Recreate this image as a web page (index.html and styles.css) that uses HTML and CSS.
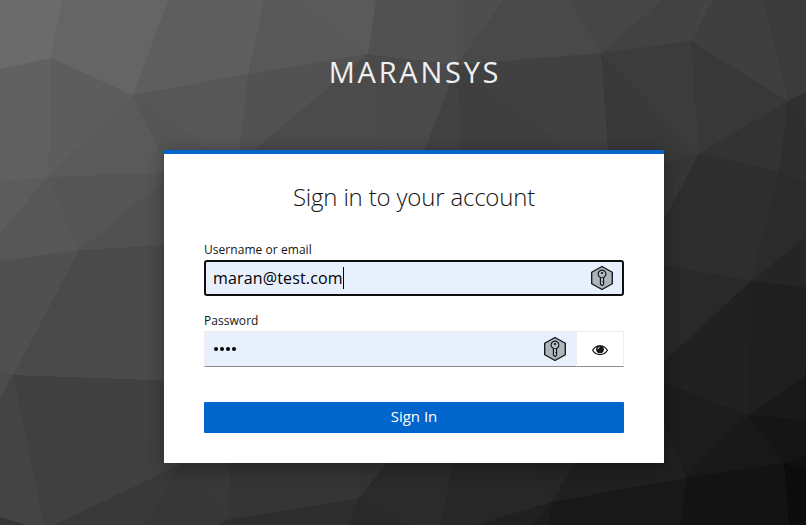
FILE: index.html
```html
<!DOCTYPE html>
<html lang="en">
<head>
<meta charset="utf-8">
<title>Sign in to Maransys</title>
<link rel="stylesheet" href="styles.css">
</head>
<body>
<svg class="backdrop" viewBox="0 0 806 525" shape-rendering="crispEdges" aria-hidden="true">
<rect width="806" height="525" fill="#444"/>
<path fill="#6b6b6b" d="M0 0H62L51 58 0 69z"/>
<path fill="#656565" d="M62 0H168L133 95 51 58z"/>
<path fill="#616161" d="M0 69 51 58 48 177 0 181z"/>
<path fill="#5d5d5d" d="M51 58 133 95 48 177z"/>
<path fill="#5e5e5e" d="M168 0H213L248 74 133 95z"/>
<path fill="#5f5f5f" d="M213 0H264L248 74z"/>
<path fill="#575757" d="M133 95 248 74 242 160H225z"/>
<path fill="#5a5a5a" d="M133 95 48 177 170 173z"/>
<path fill="#555" d="M133 95 225 160 170 173z"/>
<path fill="#585858" d="M264 0H296L368 54 248 74z"/>
<path fill="#5a5a5a" d="M296 0H376L368 54z"/>
<path fill="#525252" d="M248 74 368 54 238 165z"/>
<path fill="#4b4b4b" d="M368 54 242 160H386z"/>
<path fill="#515151" d="M376 0H457V65L368 54z"/>
<path fill="#4a4a4a" d="M368 54 457 65 421 160H386z"/>
<path fill="#4e4e4e" d="M457 0H503L457 65z"/>
<path fill="#494949" d="M503 0H569L601 53 457 65z"/>
<path fill="#424242" d="M457 65 421 160H461z"/>
<path fill="#3f3f3f" d="M457 65 461 160H585z"/>
<path fill="#414141" d="M457 65 601 53 608 160H585z"/>
<path fill="#464646" d="M569 0H662L601 53z"/>
<path fill="#424242" d="M662 0H703L691 41 601 53z"/>
<path fill="#444" d="M703 0H713L691 41z"/>
<path fill="#3c3c3c" d="M601 53 691 41 699 153z"/>
<path fill="#393939" d="M601 53 699 153 664 165 608 155z"/>
<path fill="#3f3f3f" d="M713 0H763L788 101 691 41z"/>
<path fill="#3b3b3b" d="M763 0H806V92L788 101z"/>
<path fill="#383838" d="M691 41 788 101 699 153z"/>
<path fill="#303030" d="M788 101 806 92V125z"/>
<path fill="#2e2e2e" d="M788 101 806 125V182L779 172z"/>
<path fill="#333" d="M788 101 779 172 699 153z"/>
<path fill="#363636" d="M699 153 660 163V228z"/>
<path fill="#2e2e2e" d="M699 153 779 172 751 281 660 264V228z"/>
<path fill="#2b2b2b" d="M779 172 806 182V237L751 281z"/>
<path fill="#252525" d="M751 281 806 237V287z"/>
<path fill="#292929" d="M751 281 660 264V365z"/>
<path fill="#212121" d="M751 281 748 415 660 381V365z"/>
<path fill="#1f1f1f" d="M751 281 806 287V375L748 415z"/>
<path fill="#191919" d="M748 415 806 375V420z"/>
<path fill="#1c1c1c" d="M748 415 686 478 660 411V381z"/>
<path fill="#181818" d="M748 415 784 463 686 478z"/>
<path fill="#151515" d="M748 415 806 420V456L784 463z"/>
<path fill="#101010" d="M784 463 806 456V469z"/>
<path fill="#0c0c0c" d="M784 463 806 469V525H789z"/>
<path fill="#131313" d="M784 463 789 525H681L686 478z"/>
<path fill="#5c5c5c" d="M48 177 0 181V233z"/>
<path fill="#575757" d="M48 177 0 233V261L79 250z"/>
<path fill="#555" d="M48 177 170 173V176L79 250z"/>
<path fill="#515151" d="M79 250 170 176V245z"/>
<path fill="#505050" d="M79 250 0 261V372L13 375z"/>
<path fill="#4a4a4a" d="M79 250 170 245V381L13 375z"/>
<path fill="#4b4b4b" d="M13 375 0 372V398z"/>
<path fill="#444" d="M13 375 0 398V517L28 525H44z"/>
<path fill="#404040" d="M13 375 181 459V464L54 525H44z"/>
<path fill="#414141" d="M13 375 181 381V459z"/>
<path fill="#363636" d="M0 517V525H28z"/>
<path fill="#393939" d="M181 464 54 525H145z"/>
<path fill="#373737" d="M181 464 145 525H218L229 519z"/>
<path fill="#383838" d="M181 460V464L229 519 230 460z"/>
<path fill="#353535" d="M230 460H361L358 499 229 519z"/>
<path fill="#2d2d2d" d="M229 519 358 499 349 525H218z"/>
<path fill="#333" d="M361 460H389L358 499z"/>
<path fill="#2b2b2b" d="M389 460H453L441 525H411L358 499z"/>
<path fill="#292929" d="M358 499 411 525H349z"/>
<path fill="#272727" d="M453 460H530L551 502 476 525H441z"/>
<path fill="#262626" d="M530 460H578L551 502z"/>
<path fill="#202020" d="M551 502 476 525H532z"/>
<path fill="#1c1c1c" d="M551 502 532 525H550z"/>
<path fill="#202020" d="M578 460 660 411 686 478 551 502z"/>
<path fill="#181818" d="M551 502 686 478 681 525H550z"/>
</svg>
<svg class="defs" aria-hidden="true">
<symbol id="key" viewBox="0 0 24 26">
<path d="M12 1.5 22.3 7.2V18.8L12 24.5 1.7 18.8V7.2z" fill="#adb5bd" stroke="#111" stroke-width="1.3" stroke-linejoin="round"/>
<path d="M10.4 12.6a3.9 3.9 0 1 1 3.2 0V19.4L12.3 20.6 10.4 19.2z" fill="#b3bac1" stroke="#111" stroke-width="1.1" stroke-linejoin="round"/>
<path d="M10.4 12.6h3.2M12.2 16.5h1.4" stroke="#111" stroke-width=".8"/>
<circle cx="12" cy="8" r="1.1" fill="#111"/>
</symbol>
</svg>
<main class="page">
<header class="brand">MARANSYS</header>
<section class="card">
<h1 class="title">Sign in to your account</h1>
<div class="field">
<label class="label">Username or email</label>
<div class="input input-focused"><span class="value">maran@test.com</span><i class="caret"></i><svg class="key"><use href="#key"/></svg></div>
</div>
<div class="field">
<label class="label">Password</label>
<div class="group">
<div class="input input-password"><span class="dots"><i></i><i></i><i></i><i></i></span><svg class="key"><use href="#key"/></svg></div>
<button class="reveal" aria-label="Show password"><svg width="16" height="12" viewBox="0 0 16 12"><path d="M.6 6.2C4 .3 12 .3 15.4 6.2 12 12 4 12 .6 6.2z" fill="#fff" stroke="#151515" stroke-width="1.2"/><circle cx="8" cy="5.3" r="3.9" fill="#151515"/><path d="M5.8 5.2Q6 3.4 7.8 3.2" fill="none" stroke="#fff" stroke-width=".8"/></svg></button>
</div>
</div>
<button class="submit">Sign In</button>
</section>
</main>
</body>
</html>
```
FILE: styles.css
```css
* { box-sizing: border-box; }
body {
  margin: 0;
  height: 525px;
  overflow: hidden;
  background: #333;
  color: #151515;
  font-family: "Open Sans", sans-serif;
}
.backdrop {
  position: absolute;
  inset: 0;
  width: 806px;
  height: 525px;
}
.defs { position: absolute; width: 0; height: 0; }
.page {
  position: relative;
  display: flex;
  flex-direction: column;
  align-items: center;
  padding-left: 22px;
}
.brand {
  height: 150px;
  padding: 52px 0 0 2px;
  color: #f0f0f0;
  font-size: 29px;
  font-weight: 400;
  line-height: 40px;
  letter-spacing: 2.75px;
}
.card {
  width: 500px;
  height: 313px;
  padding: 27px 40px 30px;
  display: flex;
  flex-direction: column;
  background: #fff;
  border-top: 4px solid #06c;
  box-shadow: 0 8px 16px rgba(3, 3, 3, .16), 0 0 16px rgba(3, 3, 3, .2);
}
.title {
  margin: 0 0 29px;
  text-align: center;
  font-size: 24px;
  font-weight: 300;
  line-height: 31px;
  letter-spacing: -.18px;
}
.field { height: 71px; }
.label {
  display: block;
  height: 19px;
  font-size: 12px;
  line-height: 18px;
  letter-spacing: .05px;
}
.input {
  display: flex;
  align-items: center;
  height: 36px;
  padding: 0 8px;
  background: #e8f0fe;
  border: 1px solid #ededed;
  border-bottom-color: #8a8d90;
  color: #000;
  font-size: 16px;
}
.input-focused {
  border: 2px solid #101010;
  border-radius: 3px;
  padding: 0 8px 0 7px;
  letter-spacing: .15px;
}
.caret { width: 1px; height: 22px; background: #000; }
.key { width: 24px; height: 26px; margin-left: auto; }
.group { display: flex; }
.input-password { width: 372px; border-right: 0; padding-right: 9px; }
.dots { display: flex; gap: 2px; padding-left: 1px; }
.dots i { width: 4px; height: 4px; border-radius: 50%; background: #000; }
.reveal {
  width: 48px;
  height: 36px;
  display: grid;
  place-items: center;
  padding: 1px 0 0;
  background: #fff;
  border: 1px solid #ededed;
  border-bottom-color: #8a8d90;
}
.submit {
  height: 31px;
  margin-top: 19px;
  padding: 0 0 2px;
  border: 0;
  border-radius: 1px;
  background: #06c;
  color: #fff;
  font: 15px/29px "Open Sans", sans-serif;
}
```
